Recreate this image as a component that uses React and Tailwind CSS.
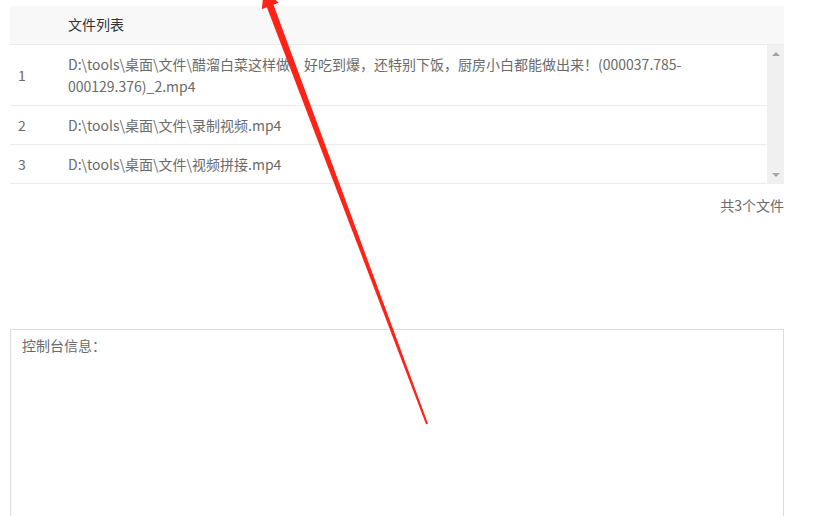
const files = [
  'D:\\tools\\桌面\\文件\\醋溜白菜这样做，好吃到爆，还特别下饭，厨房小白都能做出来！(000037.785-000129.376)_2.mp4',
  'D:\\tools\\桌面\\文件\\录制视频.mp4',
  'D:\\tools\\桌面\\文件\\视频拼接.mp4'
]

const font = { fontFamily: '"Microsoft YaHei", "Noto Sans CJK SC", sans-serif' }

const Arrow = () => (
  <svg className="absolute inset-0 pointer-events-none" width="813" height="516" viewBox="0 0 813 516">
    <polygon
      fill="#ff2216"
      points="427.9,423.6 426.1,424.4 266.9,7.2 261.8,9.2 263.9,-10.8 278.6,2.8 273.5,4.8"
    />
  </svg>
)

const App = () => {
  return (
    <div className="relative w-[813px] h-[516px] overflow-hidden bg-white text-[14px] text-[#6a6a6a]" style={font}>
      <div className="ml-[10px] w-[774px] pt-[6px]">
        <div className="flex h-[39px] bg-[#f8f8f8] border-b border-[#ebebeb] leading-[22px]">
          <div className="w-[50px]" />
          <div className="flex-1 px-2 py-[7px] text-[#333]">文件列表</div>
        </div>
        <div className="flex">
          <div className="flex-1">
            {files.map((f, i) => (
              <div key={i} className="flex items-center border-b border-[#ebebeb] leading-[22px]">
                <div className="w-[50px] px-2">{i + 1}</div>
                <div className="flex-1 px-2 py-2 break-words">{f}</div>
              </div>
            ))}
          </div>
          <div className="w-[17px] bg-[#f0f0f0] flex flex-col justify-between items-center py-[7px]">
            <div className="w-0 h-0 border-x-[4px] border-x-transparent border-b-[4px] border-b-[#a3a3a3]" />
            <div className="w-0 h-0 border-x-[4px] border-x-transparent border-t-[4px] border-t-[#a3a3a3]" />
          </div>
        </div>
        <div className="mt-[10px] text-right leading-[22px]">共3个文件</div>
        <div className="mt-[113px] h-[200px] border border-[#dcdcdc] px-[11px] py-[4px] leading-[22px]">
          控制台信息：
        </div>
      </div>
      <Arrow />
    </div>
  )
}

export default App
